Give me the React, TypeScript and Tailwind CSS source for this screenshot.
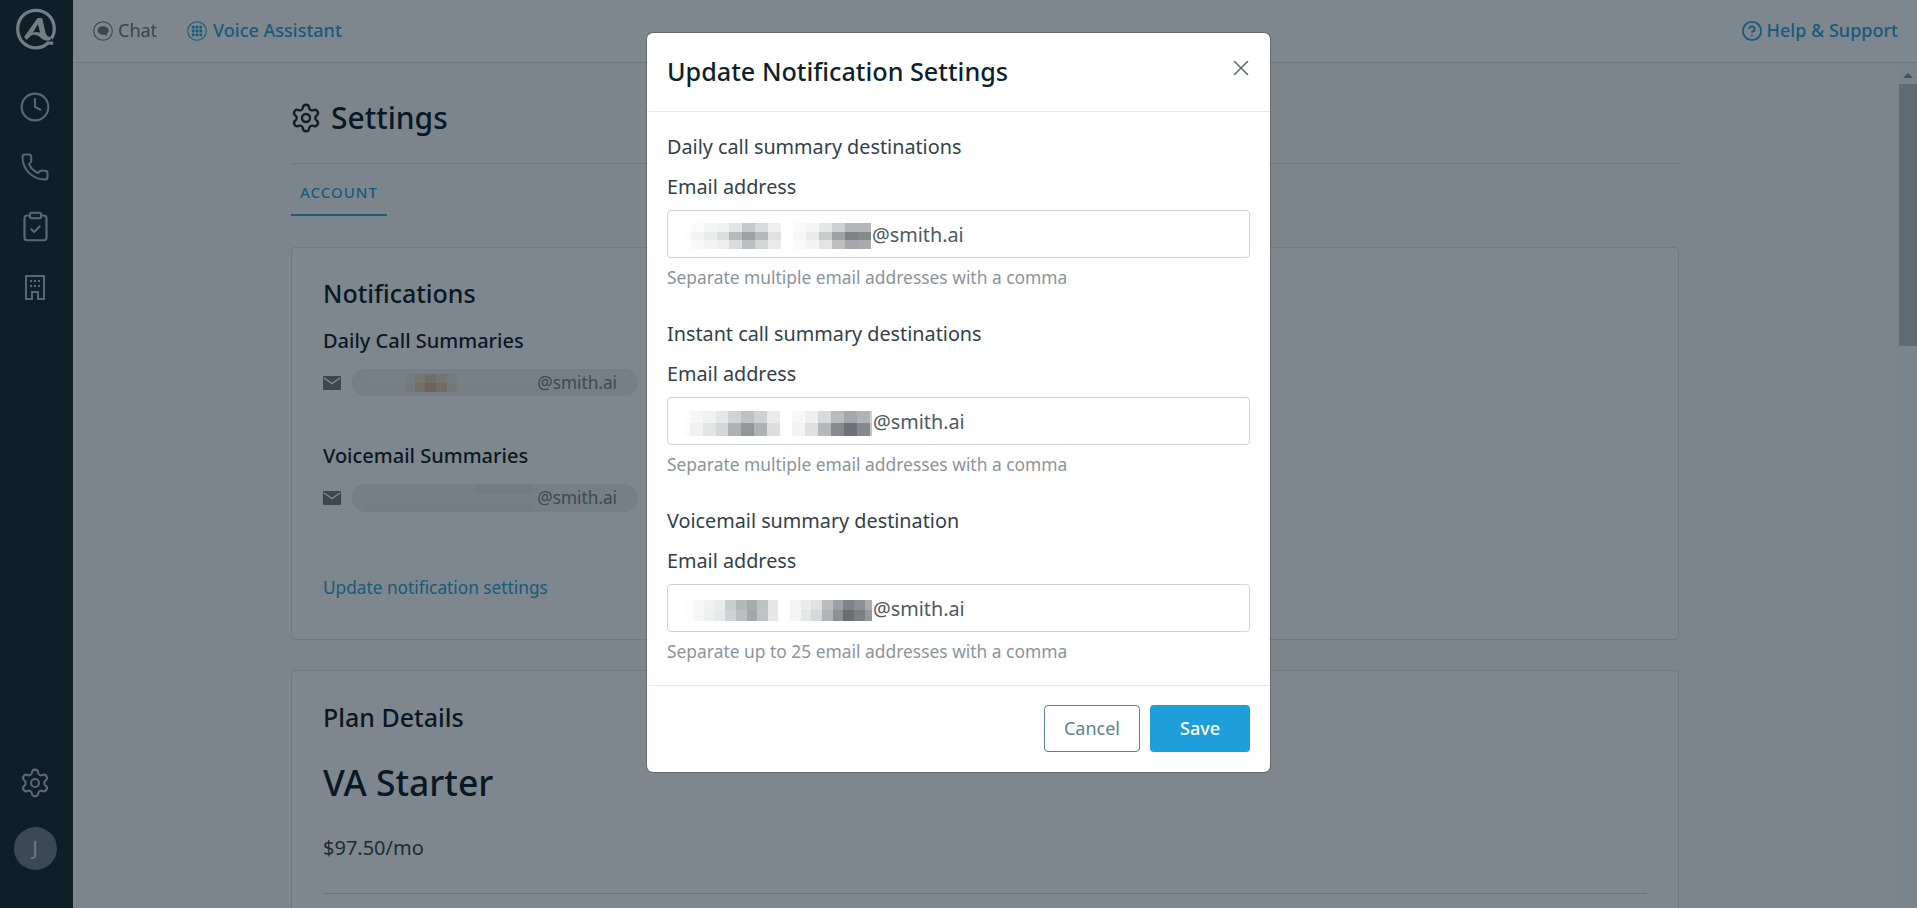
import { Clock, Phone, ClipboardCheck, Settings, CircleHelp, X } from "lucide-react";

type Block = { widths: number[]; rows: string[][] };

const input1: Block[] = [
  {
    widths: [8, 13, 13, 12, 13, 13, 13, 13],
    rows: [
      ["#fff", "#fafafa", "#f4f5f5", "#f0f1f1", "#e1e3e4", "#c6c9ca", "#d8dadb", "#eef0f0"],
      ["#fcfcfc", "#f2f3f5", "#e8eaec", "#dcdee0", "#b5babd", "#9ba0a3", "#b4b9bb", "#dfe1e3"],
      ["#fefefe", "#f9f9f9", "#f2f3f3", "#eeeeef", "#d9dbdc", "#bcbfc1", "#d3d6d7", "#eaecec"],
    ],
  },
  {
    widths: [13, 13, 13, 13, 13, 13],
    rows: [
      ["#f9f9f9", "#f5f5f5", "#e6e7e8", "#cfcfd1", "#b4b5b8", "#b4b5b8"],
      ["#f6f7f7", "#e9ebeb", "#c8c9cb", "#9fa2a5", "#7f8286", "#86898d"],
      ["#fafafa", "#f4f4f4", "#e2e3e4", "#bdbfc1", "#a5a7aa", "#a7a9ac"],
    ],
  },
];

const input2: Block[] = [
  {
    widths: [7, 13, 13, 12, 13, 13, 13, 13],
    rows: [
      ["#fdfdfd", "#f6f7f7", "#f0f2f2", "#e4e6e7", "#d0d3d5", "#bcc1c4", "#ced2d4", "#e9ebeb"],
      ["#fcfcfc", "#f0f1f2", "#e2e4e6", "#d2d6d8", "#aeb2b5", "#92979a", "#adb2b4", "#dbdddf"],
    ],
  },
  {
    widths: [13, 13, 13, 13, 13, 13, 2],
    rows: [
      ["#f8f8f8", "#eeeff0", "#d8d9db", "#b8babd", "#a4a7aa", "#b0b2b5", "#d0d1d3"],
      ["#f3f4f5", "#dfe0e2", "#b5b7ba", "#85888d", "#6e7177", "#85888d", "#c0c2c4"],
    ],
  },
];

const input3: Block[] = [
  {
    widths: [10, 11, 11, 10, 11, 11, 10, 11, 10],
    rows: [
      ["#fcfcfc", "#f6f7f7", "#f0f1f2", "#e9ebec", "#c9ced1", "#b2b7ba", "#a7acaf", "#bcc1c4", "#e4e6e7"],
      ["#fdfdfd", "#f5f6f6", "#eef0f0", "#e6e8e9", "#ced2d4", "#bbbfc2", "#a2a7aa", "#bfc3c6", "#e6e8e9"],
    ],
  },
  {
    widths: [11, 10, 11, 11, 10, 11, 11, 7],
    rows: [
      ["#f5f5f6", "#ebecec", "#e0e2e3", "#b9bbbe", "#9ea1a4", "#7f8287", "#8c8f94", "#a9abae"],
      ["#f3f4f4", "#e4e5e6", "#d6d8da", "#b2b4b7", "#8d9094", "#6a6d73", "#7b7e83", "#96999c"],
    ],
  },
];

const chip1: Block[] = [
  {
    widths: [40, 10, 10, 11, 11, 10, 80],
    rows: [
      ["#e9f0f0", "#e6e6e2", "#e6d6c8", "#e2c8b0", "#e6d6c8", "#e6e2dc", "#e9f0f0"],
      ["#e9eeee", "#e8e0d6", "#e2c8b0", "#d8b496", "#e2c8b0", "#e8e0d6", "#e9eeee"],
    ],
  },
];

const chip2: Block[] = [
  {
    widths: [110, 57],
    rows: [
      ["#e9efee", "#dfe7e6"],
      ["#e8eeee", "#e8eeee"],
      ["#dfe9ea", "#dfe9ea"],
    ],
  },
];

function Pixelated({ blocks, rowHeight, className }: { blocks: Block[]; rowHeight: number; className?: string }) {
  return (
    <span className={`flex items-center gap-[12px] ${className ?? ""}`}>
      {blocks.map((block, i) => (
        <span key={i} className="flex flex-col">
          {block.rows.map((row, r) => (
            <span key={r} className="flex">
              {row.map((color, c) => (
                <span key={c} style={{ width: block.widths[c], height: rowHeight, backgroundColor: color }} />
              ))}
            </span>
          ))}
        </span>
      ))}
    </span>
  );
}

function Logo() {
  return (
    <svg width="40" height="43" viewBox="0 0 42 44" fill="none" className="text-[#e4e8ea]">
      <path
        d="M39 36.2H33.5C30 39.6 25.8 41.2 21 41.2C9.9 41.2 1.8 32.4 1.8 21.4C1.8 10.5 10 1.8 21 1.8C32 1.8 40.2 10.5 40.2 21.4C40.2 25.2 39 28.6 37 31.4"
        stroke="currentColor"
        strokeWidth="3.4"
      />
      <path
        fillRule="evenodd"
        clipRule="evenodd"
        d="M22.6 10H27.4L31 25C32 29 34 30 37 30L36 33.4C31 34.6 28 33 25 30C21 26.4 17 27 15 29L11 33L8.5 30ZM23 16.5L25.4 25.4C23 24.4 20 24.4 17.6 25.4Z"
        fill="currentColor"
      />
    </svg>
  );
}

function BuildingIcon() {
  return (
    <svg width="20" height="25" viewBox="0 0 20 25" fill="none" className="text-[#b4bcc1]">
      <path d="M1 1H19V24H13V17H7V24H1V1Z" stroke="currentColor" strokeWidth="2" />
      <path
        d="M5 5H7V7H5ZM9 5H11V7H9ZM13 5H15V7H13ZM5 10H7V12H5ZM9 10H11V12H9ZM13 10H15V12H13Z"
        fill="currentColor"
      />
    </svg>
  );
}

function ChatIcon() {
  return (
    <svg width="20" height="20" viewBox="0 0 20 20" fill="none" className="text-[#6e7b82]">
      <circle cx="10" cy="10" r="9.3" stroke="currentColor" strokeWidth="1.1" />
      <path d="M10 5.2C13.2 5.2 15.6 7 15.6 9.5C15.6 11 14.9 12.2 13.7 13L14.2 15L11.7 13.7C8 14.2 4.6 12.4 4.6 9.5C4.6 7 7 5.2 10 5.2Z" fill="currentColor" />
    </svg>
  );
}

function DialpadIcon() {
  const spots = [6.2, 10, 13.8];
  return (
    <svg width="20" height="20" viewBox="0 0 20 20" fill="none" className="text-[#2ca5dc]">
      <circle cx="10" cy="10" r="9.3" stroke="currentColor" strokeWidth="1.1" />
      {spots.map((y) => spots.map((x) => <rect key={`${x}-${y}`} x={x - 1.4} y={y - 1.4} width="2.8" height="2.8" rx="0.7" fill="currentColor" />))}
    </svg>
  );
}

function EnvelopeIcon() {
  return (
    <svg width="18" height="14" viewBox="0 0 18 14" className="shrink-0">
      <rect width="18" height="14" rx="1" fill="#7a7a82" />
      <path d="M1 2L9 7.5L17 2" fill="none" stroke="#fafcfc" strokeWidth="1.5" />
    </svg>
  );
}

function Sidebar() {
  return (
    <aside className="w-[73px] shrink-0 bg-[#1a2c30] flex flex-col items-center pr-[3px]">
      <div className="mt-[8px] ml-[1px]">
        <Logo />
      </div>
      <nav className="mt-[40px] flex flex-col items-center text-[#b4bcc1]">
        <Clock size={32} strokeWidth={1.6} />
        <Phone size={30} strokeWidth={1.6} className="mt-[29px]" />
        <ClipboardCheck size={33} strokeWidth={1.6} className="mt-[28px]" />
        <div className="mt-[32px]">
          <BuildingIcon />
        </div>
      </nav>
      <div className="mt-auto mb-[38px] flex flex-col items-center">
        <Settings size={32} strokeWidth={1.6} className="text-[#b4bcc1]" />
        <div className="mt-[28px] w-[43px] h-[43px] rounded-full bg-[#72808a] text-[#dfe6ea] flex items-center justify-center text-[19px]">
          J
        </div>
      </div>
    </aside>
  );
}

function Topbar() {
  return (
    <header className="h-[63px] shrink-0 bg-[#fafcfc] border-b border-[#d8e2e4] flex items-center pl-[20px] pr-[19px] text-[18px]">
      <div className="flex items-center gap-[5px] text-[#6d7a82]">
        <ChatIcon />
        <span className="-mt-[1px]">Chat</span>
      </div>
      <div className="ml-[30px] flex items-center gap-[6px] text-[#2ca5dc] font-medium">
        <DialpadIcon />
        <span className="-mt-[1px]">Voice Assistant</span>
      </div>
      <div className="ml-auto flex items-center gap-[4px] text-[#2ca5dc] font-medium">
        <CircleHelp size={22} strokeWidth={2} />
        <span className="-mt-[1px]">Help &amp; Support</span>
      </div>
    </header>
  );
}

function SummaryRow({ title, blocks, rowHeight, chipHeight }: { title: string; blocks: Block[]; rowHeight: number; chipHeight: string }) {
  return (
    <div>
      <h3 className="text-[20px] leading-[28px] font-medium text-[#101f2c]">{title}</h3>
      <div className="mt-[14px] flex items-center gap-[11px]">
        <EnvelopeIcon />
        <div className={`w-[286px] rounded-full flex items-center pl-[13px] pr-[21px] justify-between text-[17.2px] text-[#77838c] bg-[#e6edee] ${chipHeight}`}>
          <Pixelated blocks={blocks} rowHeight={rowHeight} />
          <span>@smith.ai</span>
        </div>
      </div>
    </div>
  );
}

function SettingsPage() {
  return (
    <main className="flex-1 min-h-0 flex overflow-hidden bg-[#f8f9fa]">
      <div className="flex-1 min-w-0 pl-[218px] pr-[220px]">
        <div className="mt-[35px] flex items-center gap-[9px] -ml-[1px]">
          <Settings size={32} strokeWidth={1.8} className="text-[#1f2d38]" />
          <h1 className="text-[30px] leading-[40px] font-medium text-[#101f2c]">Settings</h1>
        </div>
        <div className="mt-[25px] border-t border-[#d9e1e4]">
          <div className="w-[96px] h-[52px] border-b-2 border-[#2ca5dc] pt-[6px] flex items-center justify-center text-[15px] font-medium tracking-[1px] text-[#2ca5dc]">
            ACCOUNT
          </div>
        </div>
        <section className="mt-[31px] h-[393px] rounded-[4px] border border-[#d8e2e4] bg-[#fafcfc] pl-[31px] pt-[29px]">
          <h2 className="text-[25px] leading-[32px] font-medium text-[#101f2c]">Notifications</h2>
          <div className="mt-[18px]">
            <SummaryRow title="Daily Call Summaries" blocks={chip1} rowHeight={9} chipHeight="h-[27px]" />
          </div>
          <div className="mt-[46px]">
            <SummaryRow title="Voicemail Summaries" blocks={chip2} rowHeight={9} chipHeight="h-[28px]" />
          </div>
          <a className="block mt-[63px] text-[17.25px] leading-[26px] text-[#2ca5dc]">Update notification settings</a>
        </section>
        <section className="mt-[30px] rounded-[4px] border border-[#d8e2e4] bg-[#fafcfc] pl-[31px] pt-[30px] h-[400px]">
          <h2 className="text-[25px] leading-[32px] font-medium text-[#101f2c]">Plan Details</h2>
          <div className="mt-[25px] text-[35.5px] leading-[48px] font-medium text-[#101f2c]">VA Starter</div>
          <div className="mt-[28px] text-[20px] leading-[28px] text-[#3a4750]">$97.50/mo</div>
          <div className="mt-[31px] mr-[31px] border-t border-[#cfd6da]" />
        </section>
      </div>
      <div className="w-[18px] shrink-0 bg-[#f5f6f7] flex flex-col items-center">
        <div className="mt-[10px] w-0 h-0 border-x-[5px] border-x-transparent border-b-[5px] border-b-[#8a9097]" />
        <div className="mt-[6px] w-full h-[262px] bg-[#bfc4c9]" />
      </div>
    </main>
  );
}

function Field({
  heading,
  hint,
  blocks,
  rowHeight,
}: {
  heading: string;
  hint: string;
  blocks: Block[];
  rowHeight: number;
}) {
  return (
    <div>
      <div className="text-[19.8px] leading-[30px] text-[#343f48]">{heading}</div>
      <label className="block mt-[10px] text-[19.8px] leading-[30px] text-[#343f48]">Email address</label>
      <div className="mt-[8px] h-[48px] rounded-[4px] border border-[#ced4da] pl-[15px] flex items-center text-[#4e5a63] text-[19.8px]">
        <Pixelated blocks={blocks} rowHeight={rowHeight} className="mt-[4px]" />
        <span className="ml-[1px] mt-[2px]">@smith.ai</span>
      </div>
      <div className="mt-[6px] text-[17.4px] leading-[26px] text-[#8b949b]">{hint}</div>
    </div>
  );
}

function NotificationModal() {
  return (
    <div className="absolute inset-0 bg-[#02121e]/50 flex justify-center items-start pt-[33px]">
      <div className="w-[623px] h-[739px] bg-white rounded-[6px] flex flex-col shadow-[0_0_0_1px_rgba(0,0,0,0.2)]">
        <div className="h-[79px] shrink-0 border-b border-[#e6e9ec] pl-[20px] pr-[16px] flex items-center justify-between">
          <h2 className="text-[25.2px] font-medium text-[#101f2c]">Update Notification Settings</h2>
          <X size={26} strokeWidth={1.5} className="text-[#5f6c76] -mt-[9px]" />
        </div>
        <div className="flex-1 px-[20px] pt-[20px] flex flex-col gap-[29px]">
          <Field
            heading="Daily call summary destinations"
            hint="Separate multiple email addresses with a comma"
            blocks={input1}
            rowHeight={8.7}
          />
          <Field
            heading="Instant call summary destinations"
            hint="Separate multiple email addresses with a comma"
            blocks={input2}
            rowHeight={12.5}
          />
          <Field
            heading="Voicemail summary destination"
            hint="Separate up to 25 email addresses with a comma"
            blocks={input3}
            rowHeight={10.5}
          />
        </div>
        <div className="h-[87px] shrink-0 border-t border-[#e6e9ec] pr-[20px] pb-[2px] flex items-center justify-end gap-[10px] text-[18px]">
          <button className="w-[96px] h-[47px] rounded-[4px] border border-[#5e8194] text-[#5e8194]">Cancel</button>
          <button className="w-[100px] h-[47px] rounded-[4px] bg-[#1e9fd9] text-white font-medium">Save</button>
        </div>
      </div>
    </div>
  );
}

export default function App() {
  return (
    <div className="relative h-screen overflow-hidden flex font-['Noto_Sans',sans-serif]">
      <Sidebar />
      <div className="flex-1 min-w-0 flex flex-col">
        <Topbar />
        <SettingsPage />
      </div>
      <NotificationModal />
    </div>
  );
}
